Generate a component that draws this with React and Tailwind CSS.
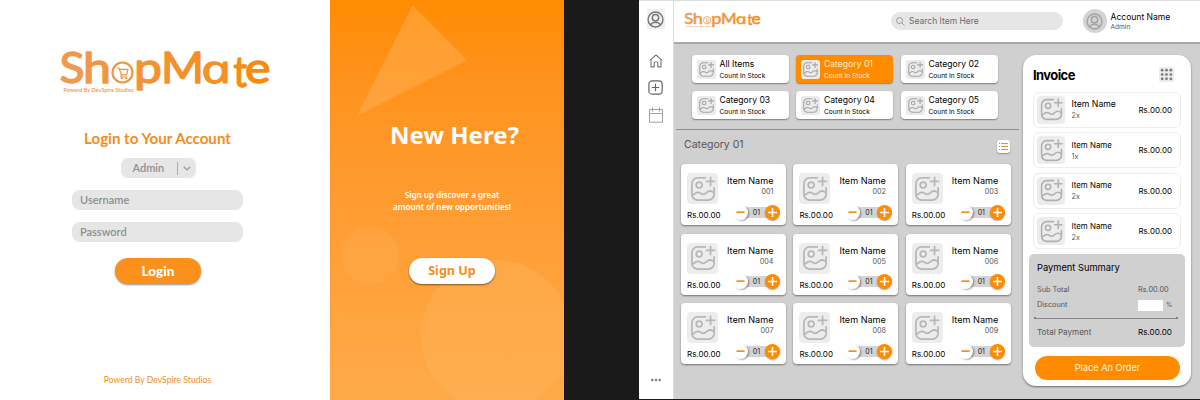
import React from "react";

function Logo({ className }) {
  const font = { fontFamily: "Lato, sans-serif" };
  return (
    <svg viewBox="0 0 212 48" className={className} fill="none">
      <defs>
        <linearGradient id="brand" gradientUnits="userSpaceOnUse" x1="0" y1="0" x2="212" y2="0">
          <stop offset="0" stopColor="#ee9a55" />
          <stop offset="1" stopColor="#f58a0c" />
        </linearGradient>
      </defs>
      <g fill="url(#brand)" stroke="url(#brand)" strokeWidth="1.400" strokeLinejoin="round" fontSize="43" fontWeight="400" style={font}>
        <text y="33" x="0.500" textLength="25" lengthAdjust="spacingAndGlyphs">S</text>
        <text y="33" x="24" textLength="28" lengthAdjust="spacingAndGlyphs">h</text>
        <text y="33" x="75" textLength="28" lengthAdjust="spacingAndGlyphs">p</text>
        <text y="33" x="102" textLength="43" lengthAdjust="spacingAndGlyphs">M</text>
      </g>
      <g fill="#f39127" stroke="#f39127" strokeWidth="1.100" strokeLinejoin="round" fontSize="39">
        <text transform="translate(145 33) scale(1.36 1) skewX(12)" x="0" y="0" fontStyle="italic" style={{ fontFamily: "Open Sans, sans-serif" }}>a</text>
      </g>
      <g fill="url(#brand)" stroke="url(#brand)" strokeWidth="1.400" strokeLinejoin="round" fontSize="43" fontWeight="400" style={font}>
        <text y="36.500" x="174.500" textLength="13.500" lengthAdjust="spacingAndGlyphs">t</text>
        <text y="33" x="186" textLength="25.500" lengthAdjust="spacingAndGlyphs">e</text>
      </g>
      <circle cx="63.500" cy="22.500" r="10" stroke="url(#brand)" strokeWidth="2.200" />
      <g stroke="#ee9440" strokeWidth="1.200" strokeLinecap="round" strokeLinejoin="round">
        <path d="M58 18h2l2.300 6.800h5.200l1.500-5.500h-8M62.500 25l-.7 2h6.200" />
        <circle cx="62.800" cy="28.300" r=".5" />
        <circle cx="67.300" cy="28.300" r=".5" />
      </g>
      <text x="4.500" y="41.500" fontSize="5.400" fontWeight="600" fill="#ee9440" textLength="70" style={font}>Powerd By DevSpire Studios</text>
    </svg>
  );
}

function ImageIcon({ className }) {
  return (
    <svg viewBox="0 0 24 24" className={className} fill="none" stroke="currentColor" strokeWidth="1.500" strokeLinecap="round" strokeLinejoin="round">
      <path d="M14 2.500H7.500a5 5 0 0 0-5 5v9a5 5 0 0 0 5 5h9a5 5 0 0 0 5-5V11" />
      <circle cx="8.700" cy="8.500" r="2.500" />
      <path d="M18.500 2v7M15 5.500h7M3 17.500l2.500-1.900c1.500-1 3-1 4.500.1 1.800 1.500 3.500 1 5-.6 2-1.900 4-1.900 6.300 0" />
    </svg>
  );
}

function UserIcon({ className }) {
  return (
    <svg viewBox="0 0 24 24" className={className} fill="none" stroke="currentColor" strokeWidth="2" strokeLinecap="round">
      <circle cx="12" cy="12" r="10.500" />
      <circle cx="12" cy="9.500" r="4.500" />
      <path d="M5 19.500c1.500-2.500 4-3.500 7-3.500s5.500 1 7 3.500" />
    </svg>
  );
}

function LoginScreen() {
  return (
    <section className="flex w-[330px] shrink-0 flex-col items-center bg-white pr-[15px] font-[Lato,sans-serif] text-[#8f8f8f]">
      <Logo className="ml-[14px] mt-[50px] h-[48px] w-[212px] shrink-0 overflow-visible" />
      <h1 className="mt-[30px] h-[20px] whitespace-nowrap text-[15.100px] font-bold leading-[20px] text-[#f58c1c]">Login to Your Account</h1>
      <div className="ml-px mt-[10px] flex h-[20px] w-[75px] shrink-0 items-center rounded-[7px] bg-[#e6e6e6] pl-[12px] text-[11px] font-semibold">
        <span className="w-[44px]">Admin</span>
        <span className="h-[13px] w-px bg-[#aaa]" />
        <svg viewBox="0 0 8 5" className="ml-[5px] h-[5px] w-[8px]" fill="none" stroke="#999" strokeWidth="1.200"><path d="M.7.800 4 4 7.300.800" /></svg>
      </div>
      <div className="mt-[12px] flex h-[20px] w-[171px] shrink-0 items-center rounded-[8px] bg-[#e6e6e6] pl-[8px] text-[11px] font-semibold">Username</div>
      <div className="mt-[12px] flex h-[20px] w-[171px] shrink-0 items-center rounded-[8px] bg-[#e6e6e6] pl-[8px] text-[11px] font-semibold">Password</div>
      <button className="ml-px mt-[16px] h-[26px] w-[86px] shrink-0 rounded-full bg-[#fb901c] text-[13.500px] font-black text-white shadow-[0_1px_2px_rgba(0,0,0,0.45)]">Login</button>
      <p className="mt-[89px] whitespace-nowrap text-[8.650px] leading-[13px] text-[#f58c1c]">Powerd By DevSpire Studios</p>
    </section>
  );
}

function SignUpPanel() {
  return (
    <section className="relative flex w-[234px] shrink-0 flex-col items-center overflow-hidden bg-linear-to-b from-[#ff8c00] to-[#ffaa49] font-['Noto_Sans',sans-serif] text-white">
      <svg viewBox="0 0 234 400" className="absolute inset-0 h-full w-full">
        <path d="M82.500 5 137 60 27 116Z" fill="#ffb45c" fillOpacity=".45" />
        <circle cx="40" cy="255" r="29" fill="#ffb45c" fillOpacity=".25" />
        <circle cx="166" cy="335" r="75" fill="#ffb45c" fillOpacity=".4" />
      </svg>
      <div className="relative flex flex-col items-center pl-[10px] pt-[118px]">
        <h2 className="ml-[5px] h-[34px] whitespace-nowrap text-[24px] font-bold leading-[34px]">New Here?</h2>
        <p className="mt-[37px] whitespace-nowrap text-center text-[8.100px] font-semibold leading-[12px]">Sign up discover a great<br />amount of new opportunities!</p>
        <button className="mt-[45px] h-[26px] w-[86px] rounded-full bg-white text-[12.600px] font-bold text-[#f58c1c] shadow-[0_1px_2px_rgba(0,0,0,0.5)]">Sign Up</button>
      </div>
    </section>
  );
}

function Sidebar() {
  return (
    <nav className="flex w-[35px] shrink-0 flex-col items-center border-r border-[#ddd] bg-white pr-px text-[#777]">
      <div className="mt-[8px] grid h-[20px] w-[18px] place-items-center bg-[#f0f0f0]"><UserIcon className="h-[17px] w-[17px]" /></div>
      <svg viewBox="0 0 14 14" className="mt-[25px] h-[14px] w-[14px]" fill="none" stroke="currentColor" strokeWidth="1.100" strokeLinejoin="round">
        <path d="M1.200 6.200 7 1l5.800 5.200M2 5.700v7.200h3.200V9.500a1.800 1.800 0 0 1 3.600 0v3.400H12V5.700" />
      </svg>
      <svg viewBox="0 0 14 14" className="mt-[12px] h-[15px] w-[15px] text-[#666]" fill="none" stroke="currentColor" strokeWidth="1.100" strokeLinecap="round">
        <rect x=".8" y=".8" width="12.400" height="12.400" rx="3" /><path d="M7 4v6M4 7h6" />
      </svg>
      <svg viewBox="0 0 14 16" className="mt-[12px] h-[16px] w-[14px] text-[#999]" fill="none" stroke="currentColor" strokeWidth=".9">
        <path d="M.5 2.500h13v12.700H.5zM.5 6.500h13M3.500.5v4M10.500.5v4" />
      </svg>
      <svg viewBox="0 0 10 4" className="mt-[255px] h-[4px] w-[10px]" fill="currentColor"><circle cx="1.300" cy="2" r="1.200" /><circle cx="5" cy="2" r="1.200" /><circle cx="8.700" cy="2" r="1.200" /></svg>
    </nav>
  );
}

function Header() {
  return (
    <header className="flex h-[43px] shrink-0 items-start border-b-2 border-[#a8a8a8] bg-white">
      <Logo className="ml-[10px] mt-[11px] h-[17.500px] w-[77px] overflow-visible" />
      <div className="ml-[130px] mt-[11px] flex h-[18px] w-[172px] items-center rounded-full bg-[#e6e6e6] pl-[5px] text-[8.500px] text-[#6c6c6c]">
        <svg viewBox="0 0 10 10" className="mr-[4px] h-[9px] w-[9px]" fill="none" stroke="#888" strokeWidth=".9"><circle cx="4" cy="4" r="3.300" /><path d="m6.500 6.500 3 3" /></svg>
        Search Item Here
      </div>
      <div className="ml-[19.500px] mt-[8px] grid h-[24px] w-[24px] place-items-center rounded-full bg-[#d4d4d4] text-[#a2a2a2]"><UserIcon className="h-[17px] w-[17px]" /></div>
      <div className="ml-[4px] mt-[10px] whitespace-nowrap">
        <p className="text-[8.550px] leading-[12px] text-black">Account Name</p>
        <p className="text-[6.600px] leading-[8px] text-[#555]">Admin</p>
      </div>
    </header>
  );
}

const categories = ["All Items", "Category 01", "Category 02", "Category 03", "Category 04", "Category 05"];

function CategoryCard({ name, active }) {
  return (
    <div className={`flex h-[28px] items-center rounded-[4px] pl-[5px] shadow-[0_1px_1.5px_rgba(0,0,0,0.4)] ${active ? "bg-[#ff8c00] text-[#ffe9cc]" : "bg-white text-black"}`}>
      <div className="grid h-[19px] w-[19px] place-items-center rounded-[3px] bg-[#ebebeb] text-[#a3a3a3]"><ImageIcon className="h-[17px] w-[17px]" /></div>
      <div className="ml-[4px] whitespace-nowrap pt-px">
        <p className="text-[8.600px] leading-[12px]">{name}</p>
        <p className="text-[6.600px] leading-[12px]">Count In Stock</p>
      </div>
    </div>
  );
}

function ItemCard({ code }) {
  return (
    <div className="flex h-[61px] flex-col rounded-[4px] bg-white shadow-[0_1px_2px_rgba(0,0,0,0.45)]">
      <div className="flex justify-between pl-[6px] pr-[12.500px] pt-[9px]">
        <div className="grid h-[31px] w-[31px] place-items-center rounded-[4px] bg-[#ededed] text-[#b7b7b7]"><ImageIcon className="h-[28px] w-[28px]" /></div>
        <div className="whitespace-nowrap pt-[2px] text-right">
          <p className="text-[9.100px] leading-[12px] text-black">Item Name</p>
          <p className="text-[7.200px] leading-[9px] text-[#555]">{code}</p>
        </div>
      </div>
      <div className="flex items-start justify-between pl-[6px] pr-[6px]">
        <span className="mt-[6px] text-[8px] leading-[11px] text-black">Rs.00.00</span>
        <div className="flex h-[16px] items-center">
          <div className="z-10 grid h-[15px] w-[15px] place-items-center rounded-full bg-white shadow-[1.5px_1px_1.5px_rgba(0,0,0,0.3)]">
            <svg viewBox="0 0 10 10" className="h-[9px] w-[9px]" stroke="#ff8c10" strokeWidth="1.900"><path d="M.5 4.600h9" /></svg>
          </div>
          <span className="-mx-[3px] grid h-[11px] w-[23px] place-items-center bg-[#d4d4d4] text-[7px] leading-none text-[#222]">01</span>
          <div className="z-10 grid h-[15px] w-[15px] place-items-center rounded-full bg-[#ff8c00] shadow-[0_1px_1.5px_rgba(0,0,0,0.35)]">
            <svg viewBox="0 0 10 10" className="h-[9px] w-[9px]" stroke="#fff" strokeWidth="1.700"><path d="M5 0v10M0 5h10" /></svg>
          </div>
        </div>
      </div>
    </div>
  );
}

const items = ["001", "002", "003", "004", "005", "006", "007", "008", "009"];

function Catalog() {
  return (
    <main className="flex w-[349px] shrink-0 flex-col">
      <div className="grid grid-cols-[97px_97px_97px] gap-x-[7.500px] gap-y-[8px] pl-[17.500px] pt-[11px]">
        {categories.map((name, i) => <CategoryCard key={name} name={name} active={i === 1} />)}
      </div>
      <div className="ml-[2px] mt-[9.500px] h-[1.500px] w-[343px] bg-[#8e8e8e]" />
      <div className="flex h-[34px] shrink-0 items-start justify-between pl-[10px] pr-[13px]">
        <h2 className="mt-[7px] text-[10.500px] leading-[16px] text-[#555]">Category 01</h2>
        <div className="mt-[10px] grid h-[13px] w-[13px] place-items-center rounded-[3px] bg-white shadow-[0_1px_1.5px_rgba(0,0,0,0.3)]">
          <svg viewBox="0 0 9 7" className="h-[7px] w-[9px]" stroke="#f28a1c" strokeWidth="1"><path d="M0 .5h1M2 .5h7M0 3.500h1M2 3.500h7M0 6.500h1M2 6.500h7" /></svg>
        </div>
      </div>
      <div className="grid grid-cols-[105px_105px_105px] gap-x-[7.400px] gap-y-[8.700px] pl-[7px]">
        {items.map((code) => <ItemCard key={code} code={code} />)}
      </div>
    </main>
  );
}

const lines = [
  { qty: "2x", large: true },
  { qty: "1x" },
  { qty: "2x" },
  { qty: "2x" },
];

function Invoice() {
  return (
    <aside className="mt-[10.500px] flex h-[331.500px] w-[168px] shrink-0 flex-col rounded-[13px] bg-white shadow-[0_1px_2px_rgba(0,0,0,0.5)]">
      <div className="flex h-[37px] shrink-0 items-center justify-between pl-[10px] pr-[17px] pt-[3px]">
        <h2 className="text-[13px] font-bold leading-[18px] tracking-[-0.600px] text-black">Invoice</h2>
        <div className="grid h-[15px] w-[15px] place-items-center rounded-[2px] bg-[#ececec]">
          <svg viewBox="0 0 12 12" className="h-[13px] w-[13px]" fill="#777">
            {[2, 6, 10].map((y) => [2, 6, 10].map((x) => <circle key={`${x}-${y}`} cx={x} cy={y} r="1.250" />))}
          </svg>
        </div>
      </div>
      <div className="flex flex-col gap-[4.500px] px-[10px]">
        {lines.map((line, i) => (
          <div key={i} className="flex h-[36px] items-center rounded-[6px] border border-[#ededed] pl-[3px] pr-[8px]">
            <div className="grid h-[28px] w-[28px] place-items-center rounded-[4px] bg-[#ececec] text-[#b0b0b0]"><ImageIcon className="h-[25px] w-[25px]" /></div>
            <div className="ml-[6.500px] whitespace-nowrap pt-px">
              <p className={`leading-[12px] text-black ${line.large ? "text-[8.700px]" : "text-[7.900px]"}`}>Item Name</p>
              <p className="text-[7.200px] leading-[12px] text-[#555]">{line.qty}</p>
            </div>
            <span className="ml-auto text-[8px] leading-[12px] text-black">Rs.00.00</span>
          </div>
        ))}
      </div>
      <div className="ml-[6px] mt-[4.500px] flex h-[93.500px] w-[156px] shrink-0 flex-col rounded-[5px] bg-[#d0d0d0] text-[7.300px] text-[#555]">
        <h3 className="ml-[8px] mt-[7.500px] text-[9.300px] leading-[14px] text-black">Payment Summary</h3>
        <div className="ml-[8px] mt-[9px] grid grid-cols-[101px_1fr] leading-[12px]"><span>Sub Total</span><span>Rs.00.00</span></div>
        <div className="ml-[8px] mt-[3px] grid grid-cols-[101px_1fr] leading-[12px]">
          <span>Discount</span>
          <span className="flex items-center gap-[3px]"><i className="h-[11px] w-[25px] bg-white" /><span className="text-[6.500px]">%</span></span>
        </div>
        <div className="ml-[5px] mt-[6px] flex h-[2px] w-[144px] items-center justify-between">
          <i className="h-[2px] w-[2px] shrink-0 rounded-full bg-[#666]" /><i className="h-px flex-1 bg-[#888]" /><i className="h-[2px] w-[2px] shrink-0 rounded-full bg-[#666]" />
        </div>
        <div className="ml-[8px] mt-[6.500px] grid grid-cols-[101px_1fr] whitespace-nowrap text-[8.100px] leading-[12px]"><span>Total Payment</span><span className="text-black">Rs.00.00</span></div>
      </div>
      <button className="ml-[12px] mt-[8.500px] h-[24px] w-[145px] rounded-full bg-[#ff8c00] text-[9.200px] text-[#fff1df]">Place An Order</button>
    </aside>
  );
}

export default function App() {
  return (
    <div className="flex h-[400px] w-[1200px] overflow-hidden bg-[#1a1a1a]">
      <LoginScreen />
      <SignUpPanel />
      <div className="ml-[75px] flex h-[398.500px] w-[561px] border-t border-[#ddd] bg-[#d0d0d0] font-[Inter,sans-serif]">
        <Sidebar />
        <div className="flex min-w-0 flex-1 flex-col">
          <Header />
          <div className="flex"><Catalog /><Invoice /></div>
        </div>
      </div>
    </div>
  );
}
